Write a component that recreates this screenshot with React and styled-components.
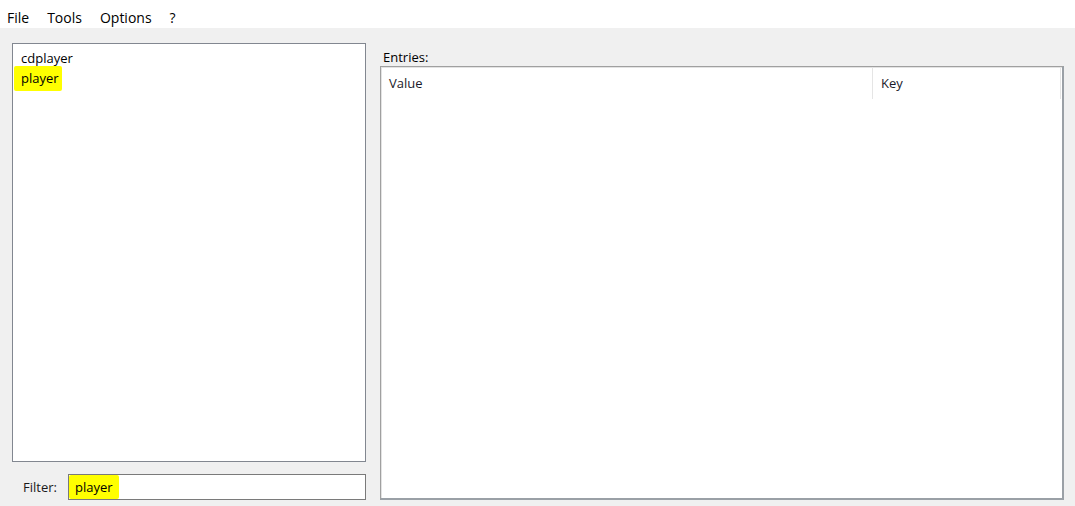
import React from 'react'
import styled, { createGlobalStyle } from 'styled-components'

const GlobalStyle = createGlobalStyle`
  html, body {
    margin: 0;
    padding: 0;
    background: #f0f0f0;
    font-family: "Open Sans", "Noto Sans", sans-serif;
    font-size: 12px;
    color: #000;
  }
`

const Window = styled.div`
  width: 1075px;
  height: 506px;
  display: flex;
  flex-direction: column;
  overflow: hidden;
`

const MenuBar = styled.div`
  height: 28px;
  background: #fff;
  display: flex;
  align-items: center;
  padding: 6px 0 0 7px;
  box-sizing: border-box;
`

const MenuItem = styled.span`
  padding-right: 18px;
  font-size: 14px;
`

const Main = styled.div`
  flex: 1;
  display: grid;
  grid-template-columns: 354px 684px;
  column-gap: 14px;
  padding: 15px 11px 6px 12px;
  box-sizing: border-box;
`

const LeftCol = styled.div`
  display: flex;
  flex-direction: column;
  gap: 12px;
  min-height: 0;
`

const ListBox = styled.div`
  flex: 1;
  background: #fff;
  border: 1px solid #828790;
  padding: 3px 0;
  box-sizing: border-box;
`

const ListRow = styled.div`
  height: 21px;
  display: flex;
  align-items: center;
  padding-left: ${p => (p.$marked ? '1px' : '8px')};
  font-size: 13px;
`

const Marker = styled.span`
  display: inline-flex;
  align-items: center;
  background: #ffff00;
  border-radius: 2px;
  padding: ${p => p.$pad || '3px 3px 4px 7px'};
  box-sizing: border-box;
`

const FilterRow = styled.div`
  height: 26px;
  display: flex;
  align-items: center;
`

const FilterLabel = styled.label`
  width: 56px;
  padding-left: 11px;
  box-sizing: border-box;
  font-size: 13px;
  color: #1a1a1a;
`

const FilterInput = styled.div`
  flex: 1;
  height: 26px;
  background: #fff;
  border: 1px solid #7a7a7a;
  box-sizing: border-box;
  display: flex;
  align-items: stretch;
  font-size: 13px;
`

const RightCol = styled.div`
  display: flex;
  flex-direction: column;
  min-height: 0;
`

const SectionLabel = styled.div`
  height: 23px;
  display: flex;
  align-items: flex-end;
  padding: 0 0 0 3px;
  box-sizing: border-box;
  font-size: 13px;
`

const Table = styled.div`
  flex: 1;
  background: #fff;
  border: 1px solid #a0a0a0;
  border-right: 2px solid #9aa0a6;
  border-bottom: 2px solid #9aa0a6;
  box-shadow: inset 1px 1px 0 #e3e3e3;
  box-sizing: border-box;
`

const HeaderRow = styled.div`
  display: grid;
  grid-template-columns: 492px 188px;
  height: 32px;
`

const HeaderCell = styled.div`
  display: flex;
  align-items: center;
  padding-left: 8px;
  border-right: 1px solid #e5e5e5;
  font-size: 13px;
  color: #1a1a2a;
`

function App() {
  return (
    <Window>
      <GlobalStyle />
      <MenuBar>
        <MenuItem>File</MenuItem>
        <MenuItem>Tools</MenuItem>
        <MenuItem>Options</MenuItem>
        <MenuItem>?</MenuItem>
      </MenuBar>
      <Main>
        <LeftCol>
          <ListBox>
            <ListRow>cdplayer</ListRow>
            <ListRow $marked>
              <Marker>player</Marker>
            </ListRow>
          </ListBox>
          <FilterRow>
            <FilterLabel>Filter:</FilterLabel>
            <FilterInput>
              <Marker $pad="0 6px 0 6px">player</Marker>
            </FilterInput>
          </FilterRow>
        </LeftCol>
        <RightCol>
          <SectionLabel>Entries:</SectionLabel>
          <Table>
            <HeaderRow>
              <HeaderCell>Value</HeaderCell>
              <HeaderCell>Key</HeaderCell>
            </HeaderRow>
          </Table>
        </RightCol>
      </Main>
    </Window>
  )
}

export default App
